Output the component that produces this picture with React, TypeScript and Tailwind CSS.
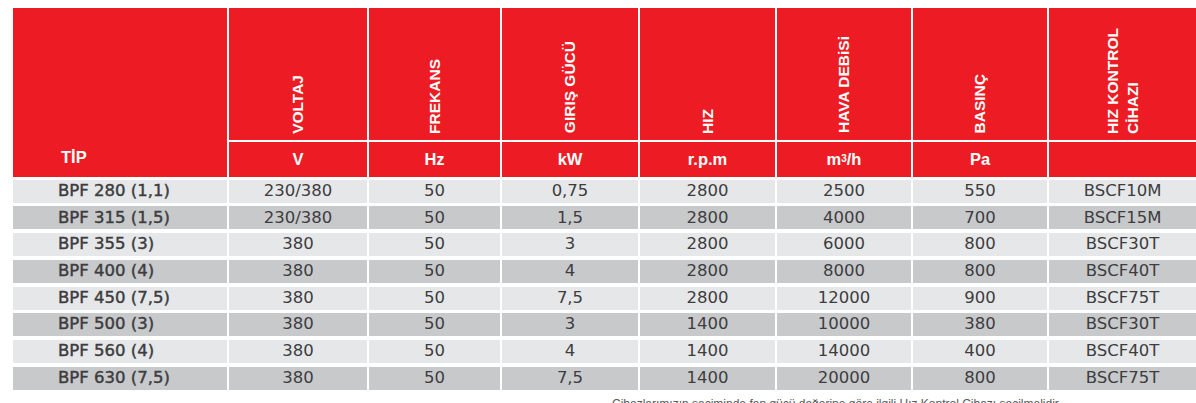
const cols = 'grid grid-cols-[214px_138px_131px_136px_135px_134px_134px_147px] gap-x-[2px]';

const heads: { name: string[]; unit: React.ReactNode }[] = [
  { name: ['VOLTAJ'], unit: 'V' },
  { name: ['FREKANS'], unit: 'Hz' },
  { name: ['GIRIŞ GÜCÜ'], unit: 'kW' },
  { name: ['HIZ'], unit: 'r.p.m' },
  { name: ['HAVA DEBiSi'], unit: (
      <>
        m<sup className="text-[10px] relative -top-[1px]">3</sup>/h
      </>
    ) },
  { name: ['BASINÇ'], unit: 'Pa' },
  { name: ['HIZ KONTROL', 'CİHAZI'], unit: '' },
];

const rows = [
  ['BPF 280 (1,1)', '230/380', '50', '0,75', '2800', '2500', '550', 'BSCF10M'],
  ['BPF 315 (1,5)', '230/380', '50', '1,5', '2800', '4000', '700', 'BSCF15M'],
  ['BPF 355 (3)', '380', '50', '3', '2800', '6000', '800', 'BSCF30T'],
  ['BPF 400 (4)', '380', '50', '4', '2800', '8000', '800', 'BSCF40T'],
  ['BPF 450 (7,5)', '380', '50', '7,5', '2800', '12000', '900', 'BSCF75T'],
  ['BPF 500 (3)', '380', '50', '3', '1400', '10000', '380', 'BSCF30T'],
  ['BPF 560 (4)', '380', '50', '4', '1400', '14000', '400', 'BSCF40T'],
  ['BPF 630 (7,5)', '380', '50', '7,5', '1400', '20000', '800', 'BSCF75T'],
];

export default function App() {
  return (
    <div className="w-[1196px] h-[403px] overflow-hidden bg-white pt-[8px] pl-[13px] font-['Liberation_Sans',Arial,sans-serif]">
      {/* header */}
      <div className={`${cols} grid-rows-[131.5px_35px] gap-y-[2px]`}>
        <div className="row-span-2 bg-[#ed1c24] flex items-end pl-[48px] pb-[11px] text-white font-bold text-[16.5px] leading-none">
          TİP
        </div>
        {heads.map((h, i) => (
          <div
            key={i}
            className="bg-[#ed1c24] flex items-end justify-center pb-[6px] text-white font-bold text-[15.5px] leading-[20px]"
          >
            <div className="[writing-mode:vertical-rl] rotate-180">
              {h.name.map((l, j) => (
                <div key={j}>{l}</div>
              ))}
            </div>
          </div>
        ))}
        {heads.map((h, i) => (
          <div
            key={'u' + i}
            className="bg-[#ed1c24] flex items-center justify-center pt-[1px] text-white font-bold text-[16.5px] leading-none"
          >
            {h.unit}
          </div>
        ))}
      </div>

      {/* body */}
      <div className="mt-[3.3px] flex flex-col gap-y-[3.7px] text-[#3d3d3f] text-[16.5px] leading-none font-['DejaVu_Sans',sans-serif]">
        {rows.map((r, i) => (
          <div key={i} className={`${cols} h-[23px]`}>
            {r.map((c, j) => (
              <div
                key={j}
                className={`${i % 2 === 0 ? 'bg-[#e6e7e8]' : 'bg-[#c8c9cb]'} flex items-center ${
                  j === 0 ? 'pl-[45px] [-webkit-text-stroke:0.45px_#3d3d3f]' : 'justify-center'
                }`}
              >
                {c}
              </div>
            ))}
          </div>
        ))}
      </div>

      <div className="mt-[8px] pl-[599px] text-[12px] leading-none text-[#58595b] whitespace-nowrap">
        Cihazlarımızın seçiminde fan gücü değerine göre ilgili Hız Kontrol Cihazı seçilmelidir.
      </div>
    </div>
  );
}
